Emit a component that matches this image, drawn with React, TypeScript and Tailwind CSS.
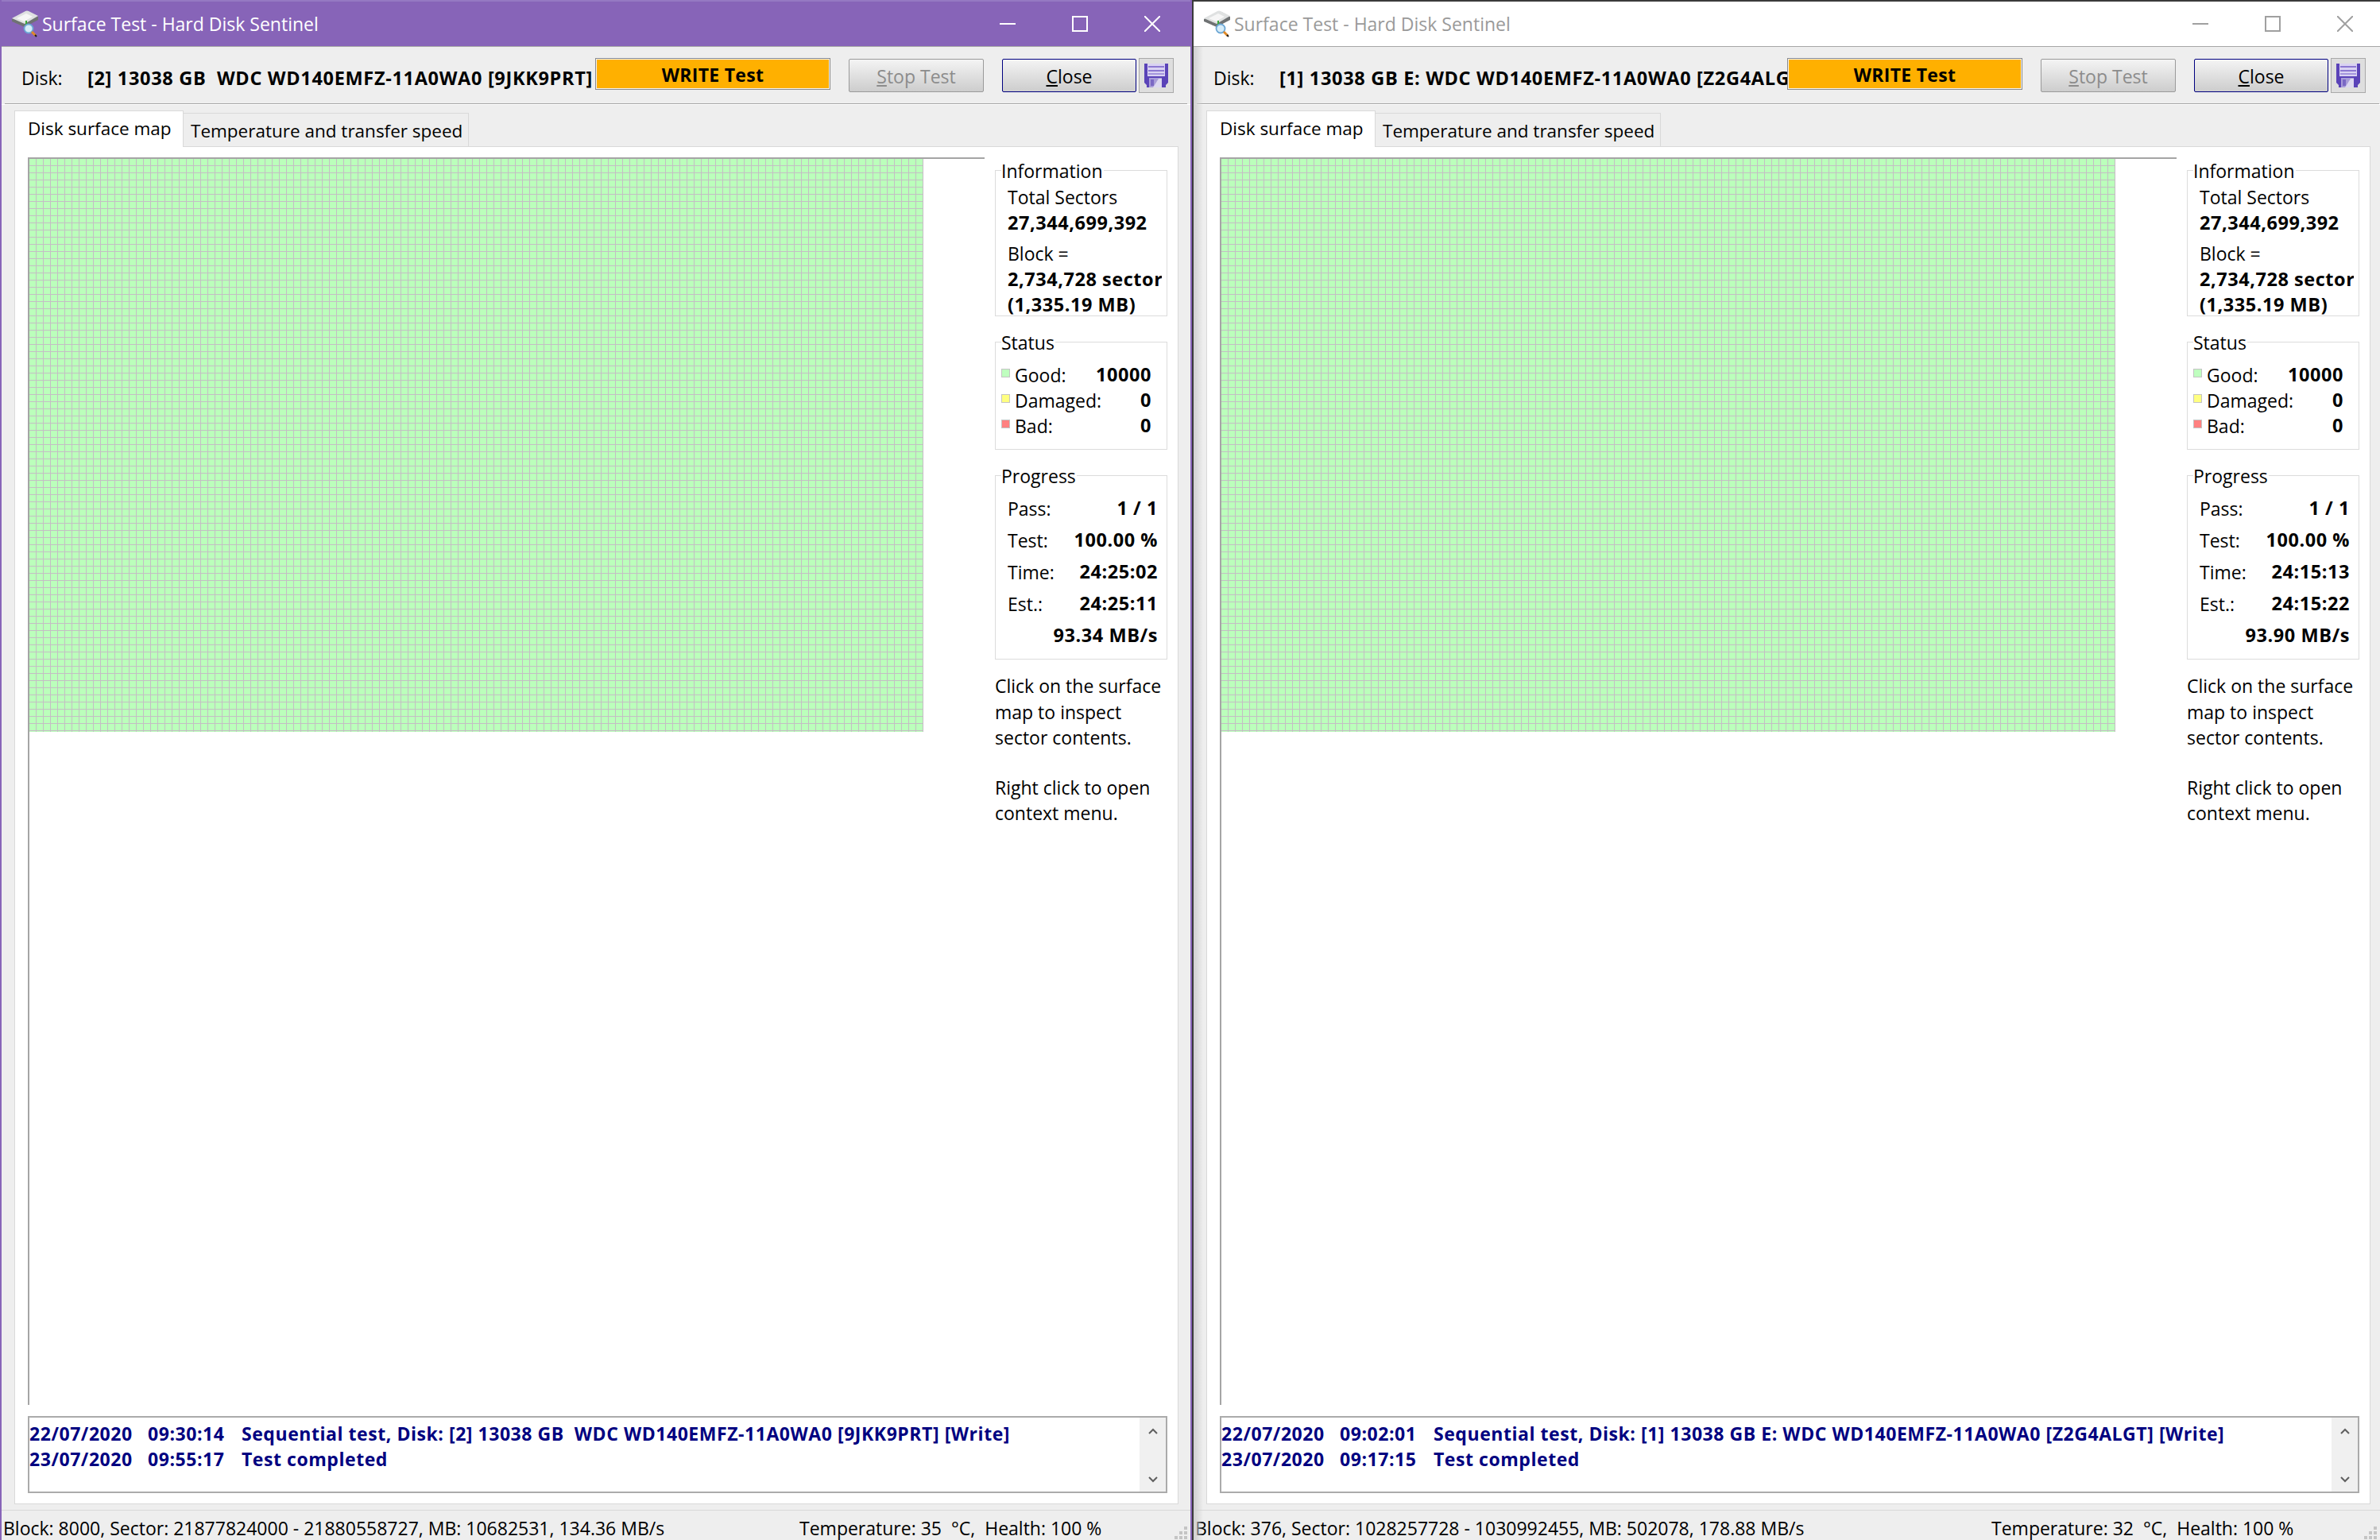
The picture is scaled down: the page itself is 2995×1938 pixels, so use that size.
import React from 'react';

const SANS = "font-['Open_Sans','Noto_Sans',sans-serif]";
const BOLD = 'text-[23.5px] font-bold tracking-[0.55px]';

function HddIcon() {
  return (
    <svg viewBox="0 0 34 34" className="w-[34px] h-[34px] shrink-0">
      <path d="M0 11 L17 2 Q19 1 22 2 L33 8 L33 12 L16 21 L0 14 Z" fill="#6f7273" />
      <path d="M0 10 L17 1 Q19 0 21 1 L33 7 L16 17 Z" fill="#dfe1e1" />
      <path d="M6 10 L18 4 L26 8 L15 14 Z" fill="#f6f6f6" />
      <rect x="17" y="13" width="2" height="6" fill="#38a838" />
      <circle cx="21" cy="23" r="5.5" fill="#d6ecf8" stroke="#6ba6d4" strokeWidth="1.8" />
      <path d="M25 27 L30 32" stroke="#e08a28" strokeWidth="3" />
      <path d="M29 31 L31 33" stroke="#1c1c1c" strokeWidth="2" />
    </svg>
  );
}

function SaveIcon() {
  return (
    <svg viewBox="0 0 30 30" className="w-[30px] h-[30px]">
      <path d="M0 0 H30 V24 L27 27 V30 H3 V27 L0 24 Z" fill="#5a43b8" />
      <rect x="4" y="0" width="22" height="16" fill="#d9d2f2" />
      <rect x="5" y="3" width="20" height="2" fill="#8c78d2" />
      <rect x="5" y="8" width="20" height="2" fill="#8c78d2" />
      <rect x="5" y="12" width="20" height="2" fill="#a596de" />
      <rect x="6" y="18" width="16" height="12" fill="#a89cd8" />
      <path d="M11 30 L18 19 H22 V30 Z" fill="#dcd8f0" />
      <rect x="8" y="20" width="4" height="8" fill="#7a68c4" />
    </svg>
  );
}

function GroupBox({ title, className, children }: { title: string; className: string; children: React.ReactNode }) {
  return (
    <div className={`relative border border-[#dcdcdc] ${className}`}>
      <span className="absolute left-[7px] top-[-16px] bg-white pr-px leading-[32px]">{title}</span>
      {children}
    </div>
  );
}

function Row({ label, value }: { label: string; value: string }) {
  return (
    <div className="flex h-10 items-center justify-between">
      <span>{label}</span>
      <span className={BOLD}>{value}</span>
    </div>
  );
}

function StatusRow({ color, label, value }: { color: string; label: string; value: string }) {
  return (
    <div className="flex h-8 items-center">
      <span className={`mb-[6px] mr-[6px] h-[11px] w-[11px] ${color}`} />
      <span>{label}</span>
      <span className={`ml-auto ${BOLD}`}>{value}</span>
    </div>
  );
}

interface WindowProps {
  active: boolean;
  disk: string;
  time: string;
  est: string;
  speed: string;
  start: string;
  end: string;
  logDisk: string;
  statusLeft: string;
  temp: string;
}

function TestWindow({ active, disk, time, est, speed, start, end, logDisk, statusLeft, temp }: WindowProps) {
  return (
    <div
      className={`relative flex h-[1938px] shrink-0 flex-col bg-[#eeeeee] text-[23px] text-black ${SANS} ${
        active
          ? 'w-[1500px] border-x-2 border-[#8764b8]'
          : 'w-[1495px] border-l-2 border-[#3a3a3a]'
      }`}
    >
      {/* Title bar */}
      <div
        className={`flex h-[59px] shrink-0 items-center border-t-2 border-b border-b-[#a6a6a6] pl-[13px] ${
          active ? 'border-t-[#9579c2] bg-[#8764b8] text-white' : 'border-t-[#3a3a3a] bg-white text-[#9a9a9a]'
        }`}
      >
        <HddIcon />
        <span className="ml-[4px]">Surface Test - Hard Disk Sentinel</span>
        <div className={`ml-auto flex items-center gap-[71px] ${active ? 'pr-[38px] text-white' : 'pr-[34px] text-[#a0a0a0]'}`}>
          <svg viewBox="0 0 20 20" className="h-5 w-5">
            <path d="M0 10 H20" stroke="currentColor" strokeWidth="2" />
          </svg>
          <svg viewBox="0 0 20 20" className="h-5 w-5">
            <rect x="1" y="1" width="18" height="18" fill="none" stroke="currentColor" strokeWidth="2" />
          </svg>
          <svg viewBox="0 0 20 20" className="h-5 w-5">
            <path d="M0 0 L20 20 M20 0 L0 20" stroke="currentColor" strokeWidth="2" />
          </svg>
        </div>
      </div>

      {/* Toolbar */}
      <div className="ml-[4px] flex h-[72px] w-[1488px] shrink-0 items-center border-b border-b-[#a6a6a6] pl-[21px]">
        <span className="w-[83px] shrink-0 pt-[8px]">Disk:</span>
        <span className="w-[639px] shrink-0 overflow-hidden pt-[8px] text-[23.5px] font-bold tracking-[0.68px] whitespace-pre">{disk}</span>
        <div className="mb-[3px] flex h-[40px] w-[296px] shrink-0 items-center justify-center border border-[#8a8a8a] bg-[#ffb000] pt-[2px] text-[23px] font-bold tracking-[0.3px] outline outline-1 -outline-offset-2 outline-[#f4f4f4]">
          WRITE Test
        </div>
        <div className="ml-[23px] flex h-[42px] w-[170px] shrink-0 items-center justify-center rounded-[2px] border border-[#9a9a9a] bg-gradient-to-b from-[#f4f4f4] to-[#cdcdcd] pt-[3px] text-[#8c8c8c]">
          <span><span className="underline">S</span>top Test</span>
        </div>
        <div className="ml-[23px] flex h-[42px] w-[169px] shrink-0 items-center justify-center rounded-[2px] border border-[#000080] bg-gradient-to-b from-[#f4f4f4] to-[#cdcdcd] pt-[3px]">
          <span><span className="underline">C</span>lose</span>
        </div>
        <div className="ml-[3px] flex h-[44px] w-[44px] shrink-0 items-center justify-center border border-[#a9a9a9] bg-[#dedede]">
          <SaveIcon />
        </div>
      </div>

      {/* Tabs */}
      <div className="flex h-[53px] shrink-0 items-end border-t border-t-white pl-[16px] text-[22.5px]">
        <div className="relative top-px z-10 flex h-[46px] w-[213px] items-center border border-b-0 border-[#d9d9d9] bg-white pb-[2px] pl-[16px]">
          Disk surface map
        </div>
        <div className="flex h-[42px] w-[359px] items-center border border-b-0 border-l-0 border-[#d9d9d9] pt-[2px] pl-[9px]">
          Temperature and transfer speed
        </div>
      </div>

      {/* Panel */}
      <div className="ml-[16px] flex h-[1709px] w-[1465px] shrink-0 flex-col border border-[#d9d9d9] bg-white pt-[13px] pl-[16px]">
        <div className="flex h-[1570px] shrink-0">
          <div className="h-full w-[1204px] shrink-0 border-t-2 border-l-2 border-t-[#a5a5a5] border-l-[#a5a5a5]">
            <div className="h-[721px] w-[1125px] bg-[#bbffbb] bg-[linear-gradient(to_right,transparent_8px,#c4bec4_8px),linear-gradient(to_bottom,transparent_8px,#c4bec4_8px)] bg-[size:9px_9px]" />
          </div>
          <div className="ml-[13px] w-[217px] shrink-0 pt-[16px]">
            <GroupBox title="Information" className="h-[184px]">
              <div className="pt-[17px] pl-[15px] leading-[32px]">
                <div>Total Sectors</div>
                <div className={BOLD}>27,344,699,392</div>
                <div className="mt-[7px]">Block =</div>
                <div className={`w-[194px] overflow-hidden whitespace-nowrap ${BOLD}`}>2,734,728 sectors</div>
                <div className={BOLD}>(1,335.19 MB)</div>
              </div>
            </GroupBox>
            <GroupBox title="Status" className="mt-[32px] h-[136px]">
              <div className="pt-[25px] pr-[19px] pl-[7px]">
                <StatusRow color="bg-[#bfffbf] border border-[#c4c4c4]" label="Good:" value="10000" />
                <StatusRow color="bg-[#ffff80] border border-[#c4c4c4]" label="Damaged:" value="0" />
                <StatusRow color="bg-[#ff8080] border border-[#c4c4c4]" label="Bad:" value="0" />
              </div>
            </GroupBox>
            <GroupBox title="Progress" className="mt-[32px] h-[232px]">
              <div className="pt-[21px] pr-[11px] pl-[15px]">
                <Row label="Pass:" value="1 / 1" />
                <Row label="Test:" value="100.00 %" />
                <Row label="Time:" value={time} />
                <Row label="Est.:" value={est} />
                <div className={`flex h-10 items-center justify-end ${BOLD}`}>{speed}</div>
              </div>
            </GroupBox>
            <div className="mt-[17px] leading-[32.5px]">
              <p>Click on the surface<br />map to inspect<br />sector contents.</p>
              <p className="mt-[30px]">Right click to open<br />context menu.</p>
            </div>
          </div>
        </div>

        {/* Log */}
        <div className="mt-[14px] flex h-[97px] w-[1434px] shrink-0 border-2 border-[#ababab] text-[23px] font-bold tracking-[0.55px] text-[#000080]">
          <div className="flex-1 pt-[4px] leading-[32px] whitespace-pre">
            <div className="flex">
              <span className="w-[149px]">{start.slice(0, 10)}</span>
              <span className="w-[118px]">{start.slice(11)}</span>
              <span>{logDisk}</span>
            </div>
            <div className="flex">
              <span className="w-[149px]">{end.slice(0, 10)}</span>
              <span className="w-[118px]">{end.slice(11)}</span>
              <span>Test completed</span>
            </div>
          </div>
          <div className="flex w-[33px] shrink-0 flex-col items-center justify-between bg-[#f0f0f0] pt-[13px] pb-[11px]">
            <svg viewBox="0 0 12 8" className="h-2 w-3">
              <path d="M1 7 L6 2 L11 7" fill="none" stroke="#606060" strokeWidth="2" />
            </svg>
            <svg viewBox="0 0 12 8" className="h-2 w-3">
              <path d="M1 1 L6 6 L11 1" fill="none" stroke="#606060" strokeWidth="2" />
            </svg>
          </div>
        </div>
      </div>

      {/* Status bar */}
      <div className="relative mt-[7px] flex flex-1 items-center border-t border-t-[#d9d9d9] pt-[5px] pl-[2px]">
        <span className="w-[1002px] shrink-0">{statusLeft}</span>
        <span className="whitespace-pre">{temp}</span>
        <div className="absolute right-[4px] bottom-[4px] grid grid-cols-3 gap-[2px]">
          <span /><span /><span className="h-1 w-1 bg-[#c4c4c4]" />
          <span /><span className="h-1 w-1 bg-[#c4c4c4]" /><span className="h-1 w-1 bg-[#c4c4c4]" />
          <span className="h-1 w-1 bg-[#c4c4c4]" /><span className="h-1 w-1 bg-[#c4c4c4]" /><span className="h-1 w-1 bg-[#c4c4c4]" />
        </div>
      </div>

      {/* Shadow thrown by the window on top */}
      {!active && (
        <div className="absolute top-[59px] bottom-0 left-0 w-3 bg-gradient-to-r from-[#cfcfcf] to-transparent" />
      )}
    </div>
  );
}

export default function App() {
  return (
    <div className="flex h-[1938px] w-[2995px] overflow-hidden bg-[#eeeeee]">
      <TestWindow
        active
        disk="[2] 13038 GB  WDC WD140EMFZ-11A0WA0 [9JKK9PRT]"
        time="24:25:02"
        est="24:25:11"
        speed="93.34 MB/s"
        start="22/07/2020 09:30:14"
        end="23/07/2020 09:55:17"
        logDisk="Sequential test, Disk: [2] 13038 GB  WDC WD140EMFZ-11A0WA0 [9JKK9PRT] [Write]"
        statusLeft="Block: 8000, Sector: 21877824000 - 21880558727, MB: 10682531, 134.36 MB/s"
        temp="Temperature: 35  °C,  Health: 100 %"
      />
      <TestWindow
        active={false}
        disk="[1] 13038 GB E: WDC WD140EMFZ-11A0WA0 [Z2G4ALGT]"
        time="24:15:13"
        est="24:15:22"
        speed="93.90 MB/s"
        start="22/07/2020 09:02:01"
        end="23/07/2020 09:17:15"
        logDisk="Sequential test, Disk: [1] 13038 GB E: WDC WD140EMFZ-11A0WA0 [Z2G4ALGT] [Write]"
        statusLeft="Block: 376, Sector: 1028257728 - 1030992455, MB: 502078, 178.88 MB/s"
        temp="Temperature: 32  °C,  Health: 100 %"
      />
    </div>
  );
}
